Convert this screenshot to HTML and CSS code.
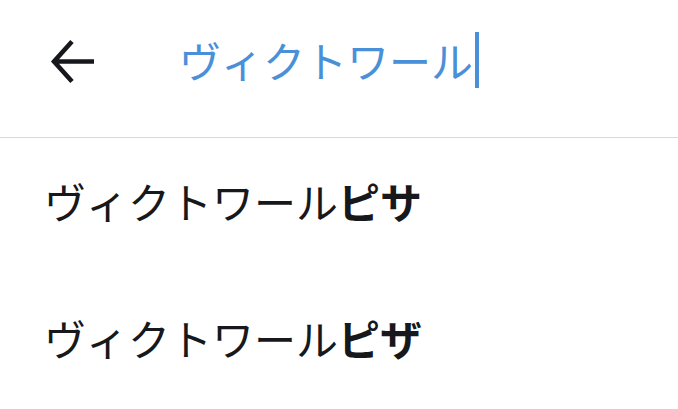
FILE: index.html
```html
<!DOCTYPE html>
<html lang="ja">
<head>
    <meta charset="UTF-8">
    <meta name="viewport" content="width=device-width, initial-scale=1.0">
    <title>検索</title>
    <link rel="stylesheet" href="styles.css">
</head>
<body>

<div class="screen">
    <!-- search bar -->
    <div class="search-bar">
        <div class="back-btn">
            <svg width="48" height="48" viewBox="0 0 48 48">
                <path d="M47 23.5 H7 M25 3.5 L7 23.5 L25 43.5" fill="none" stroke="#16181b" stroke-width="4.6" stroke-linejoin="miter"/>
            </svg>
        </div>
        <div class="query">ヴィクトワール<span class="cursor"></span></div>
    </div>

    <!-- suggestions -->
    <div class="suggest-list">
        <div class="suggest-item">ヴィクトワール<b>ピサ</b></div>
        <div class="suggest-item">ヴィクトワール<b>ピザ</b></div>
    </div>
</div>

</body>
</html>
```

FILE: styles.css
```css
body {
    margin: 0;
    background-color: #ffffff;
    font-family: "Noto Sans CJK JP", "Noto Sans", sans-serif;
    color: #16181b;
}
.screen {
    width: 678px;
    height: 409px;
    overflow: hidden;
}
.search-bar {
    display: flex;
    align-items: center;
    height: 137px;
    border-bottom: 1px solid #d6dad8;
}
.back-btn {
    display: flex;
    width: 48px;
    height: 48px;
    margin-left: 47px;
    margin-top: -14px;
}
.query {
    display: flex;
    align-items: center;
    margin-left: 84px;
    margin-top: -18px;
    font-size: 42px;
    line-height: 56px;
    color: #4a90d9;
}
.cursor {
    display: inline-block;
    width: 4px;
    height: 56px;
    margin-left: 2px;
    background-color: #4a90d9;
}
.suggest-list {
    margin-top: -6px;
}
.suggest-item {
    height: 137px;
    line-height: 137px;
    padding-left: 44px;
    font-size: 42px;
    white-space: nowrap;
}
.suggest-item b {
    font-weight: 700;
}
```
